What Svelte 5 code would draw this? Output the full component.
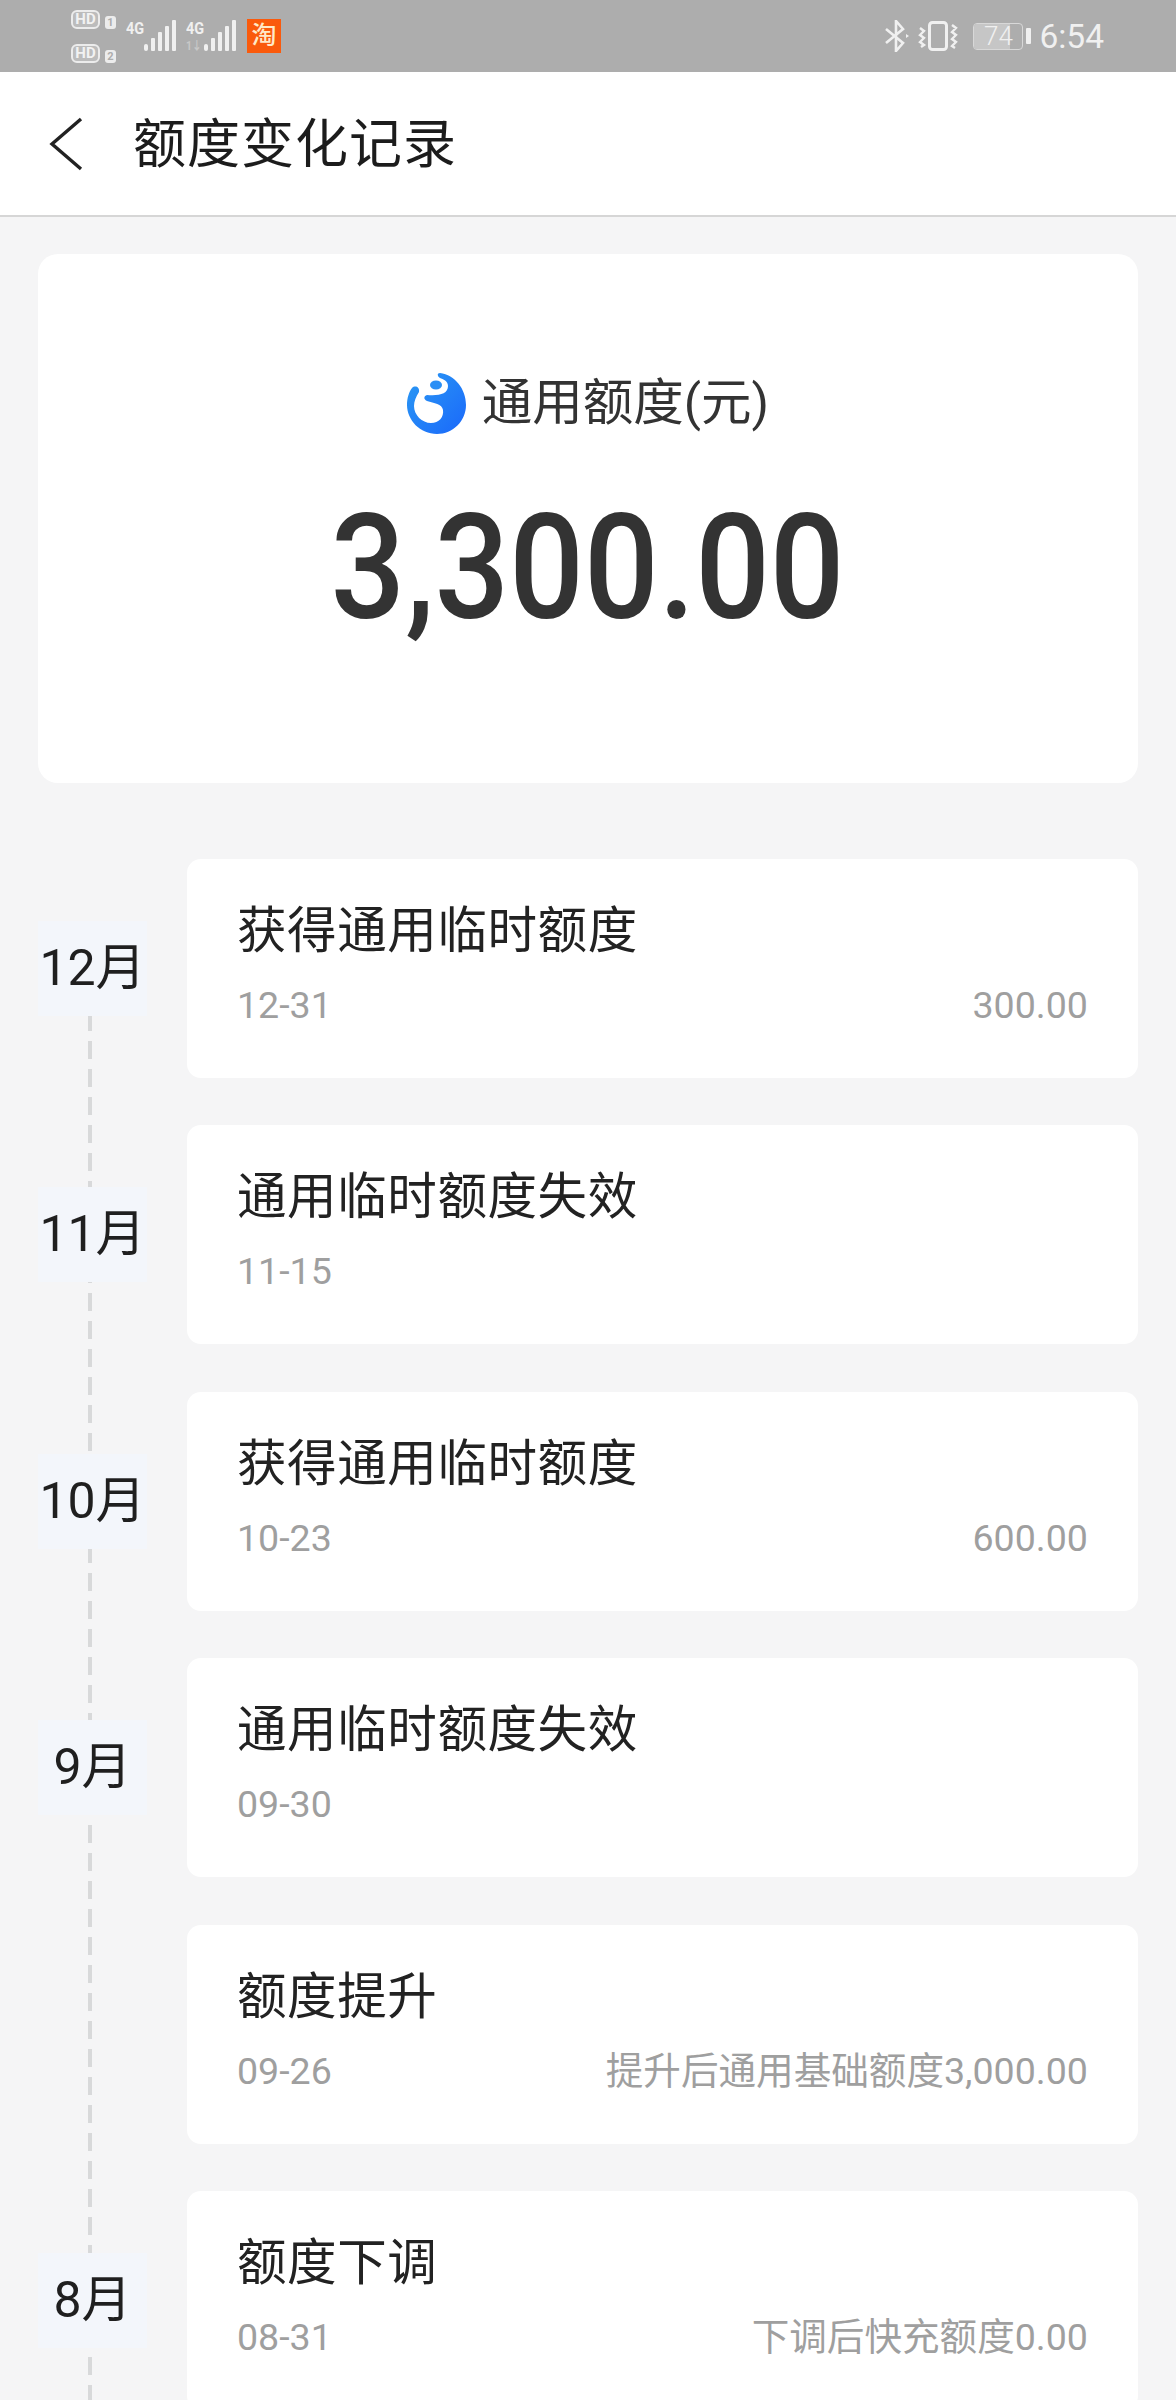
<script>
  const records = [
    { month: '12月', title: '获得通用临时额度', date: '12-31', note: '300.00' },
    { month: '11月', title: '通用临时额度失效', date: '11-15', note: '' },
    { month: '10月', title: '获得通用临时额度', date: '10-23', note: '600.00' },
    { month: '9月', title: '通用临时额度失效', date: '09-30', note: '' },
    { month: '', title: '额度提升', date: '09-26', note: '提升后通用基础额度3,000.00' },
    { month: '8月', title: '额度下调', date: '08-31', note: '下调后快充额度0.00' }
  ];
</script>

<div class="page">
  <div class="statusbar">
    <div class="status-left">
      <div class="hd">
        <div class="hd-row"><span class="hd-badge">HD</span><span class="sim">1</span></div>
        <div class="hd-row"><span class="hd-badge">HD</span><span class="sim">2</span></div>
      </div>
      {#each [0, 1] as n}
        <div class="signal">
          <div class="net">
            <span>4G</span>
            {#if n === 1}<span class="updown">1↓</span>{/if}
          </div>
          <svg width="32" height="32" viewBox="0 0 32 32" fill="#f0f0f0">
            <rect x="0" y="24" width="4" height="7" rx="2" />
            <rect x="7" y="18" width="4" height="13" rx="1" />
            <rect x="14" y="12" width="4" height="19" rx="1" />
            <rect x="21" y="6" width="4" height="25" rx="1" />
            <rect x="28" y="0" width="4" height="31" rx="1" />
          </svg>
        </div>
      {/each}
      <div class="taobao">淘</div>
    </div>
    <div class="status-right">
      <svg class="bt" width="25" height="32" viewBox="0 0 25 32" fill="none" stroke="#f0f0f0" stroke-width="2.6">
        <path d="M2 9l17 14-7 8V1l7 8L2 23" />
        <path d="M22 14l3 2-3 2z" fill="#f0f0f0" stroke="none" />
      </svg>
      <svg class="vibrate" width="40" height="32" viewBox="0 0 40 32" fill="none" stroke="#f0f0f0">
        <rect x="11.5" y="2.5" width="17" height="27" rx="3" stroke-width="3" />
        <path d="M2 8l4 3-4 4 4 3-4 4 4 3-3 2M34 5l4 3-4 4 4 3-4 4 4 3-4 4 3 2" stroke-width="2.4" />
      </svg>
      <div class="battery">
        <div class="battery-body"><div class="battery-fill" style="width: 74%"></div><span>74</span></div>
        <div class="battery-cap"></div>
      </div>
      <span class="clock">6:54</span>
    </div>
  </div>

  <header class="topbar">
    <svg class="back" width="34" height="54" viewBox="0 0 34 54" fill="none" stroke="#222" stroke-width="3.4">
      <path d="M32 2L3 27l29 25" />
    </svg>
    <h1>额度变化记录</h1>
  </header>

  <main class="content">
    <section class="summary">
      <div class="summary-label">
        <svg class="logo" width="60" height="62" viewBox="0 0 60 62">
          <defs>
            <linearGradient id="logo" x1="0" y1="0" x2="1" y2="1">
              <stop offset="0" stop-color="#2b9af3" />
              <stop offset="1" stop-color="#1a68fb" />
            </linearGradient>
          </defs>
          <path fill="url(#logo)" d="M33 1C48 3 59 17 59 33C59 49 46 62 30 62C13 62 0 48 0 33C0 26 2 20 5 16C8 13 13 15 12 20C9 25 7 29 7 34C7 43 15 51 24 51C32 51 37 45 36 38C35 32 27 31 20 29C16 27 17 24 20 23C32 24 41 22 41 14C41 9 36 7 33 6C30 4 30 1 33 1Z" />
          <ellipse cx="29" cy="13" rx="6" ry="4.5" fill="#2a8ff5" />
        </svg>
        <span>通用额度(元)</span>
      </div>
      <div class="amount">3,300.00</div>
    </section>

    <div class="timeline">
      {#each records as r}
        <div class="row">
          <div class="month-col">
            {#if r.month}<div class="month">{r.month}</div>{/if}
          </div>
          <div class="card">
            <div class="title">{r.title}</div>
            <div class="meta">
              <span>{r.date}</span>
              {#if r.note}<span>{r.note}</span>{/if}
            </div>
          </div>
        </div>
      {/each}
    </div>
  </main>
</div>

<style>
  :global(body) {
    margin: 0;
    background: #f5f5f6;
  }

  .page {
    height: 2400px;
    overflow: hidden;
    font-family: Roboto, "Noto Sans CJK SC", sans-serif;
    background: #f5f5f6;
  }

  .statusbar {
    height: 72px;
    background: #adadad;
    display: flex;
    align-items: center;
    justify-content: space-between;
    padding: 0 72px 0 71px;
    box-sizing: border-box;
    color: #f0f0f0;
  }

  .status-left,
  .status-right {
    display: flex;
    align-items: center;
  }

  .status-left { gap: 10px; }

  .vibrate { margin-left: 9px; }
  .battery { margin-left: 15px; }
  .clock { margin-left: 8px; }

  .hd {
    display: flex;
    flex-direction: column;
    gap: 15px;
  }

  .hd-row {
    display: flex;
    align-items: flex-end;
    gap: 5px;
  }

  .hd-badge {
    width: 29px;
    height: 19px;
    box-sizing: border-box;
    border: 2.5px solid #ececec;
    border-radius: 6px;
    background: #bcbcbc;
    color: #f2f2f2;
    font-size: 15px;
    font-weight: 700;
    line-height: 14px;
    text-align: center;
  }

  .sim {
    width: 11px;
    height: 13px;
    border-radius: 3px;
    background: #ececec;
    color: #adadad;
    font-size: 11px;
    font-weight: 700;
    line-height: 13px;
    text-align: center;
  }

  .signal {
    display: flex;
    align-items: flex-start;
    height: 32px;
  }

  .net {
    width: 18px;
    font-size: 17px;
    font-weight: 700;
    line-height: 16px;
    transform: scaleX(0.85);
    transform-origin: left top;
  }

  .updown {
    display: block;
    font-size: 12px;
    line-height: 12px;
    color: #c8c8c8;
    margin-top: 4px;
  }

  .taobao {
    width: 34px;
    height: 34px;
    margin-left: 1px;
    background: #fa5a0c;
    color: #ffe9c8;
    font-size: 25px;
    font-weight: 500;
    line-height: 34px;
    text-align: center;
  }

  .battery {
    display: flex;
    align-items: center;
    gap: 3px;
  }

  .battery-body {
    position: relative;
    width: 50px;
    height: 27px;
    border: 1.5px solid #d8d8d8;
    border-radius: 4px;
    box-sizing: border-box;
  }

  .battery-fill {
    height: 100%;
    border-radius: 2.5px 0 0 2.5px;
    background: #c6c6c6;
  }

  .battery-body span {
    position: absolute;
    inset: 0;
    font-size: 26px;
    line-height: 24px;
    text-align: center;
    font-weight: 300;
    color: #f0f0f0;
  }

  .battery-cap {
    width: 5px;
    height: 16px;
    border-radius: 1px;
    background: #f0f0f0;
  }

  .clock {
    font-size: 33.5px;
    color: #f0f0f0;
  }

  .topbar {
    height: 145px;
    background: #fff;
    border-bottom: 2px solid #d6d6d6;
    box-sizing: border-box;
    display: flex;
    align-items: center;
    padding-left: 49px;
  }

  .back { margin-right: 50px; }

  .topbar h1 {
    margin: -8px 0 0;
    font-size: 53px;
    font-weight: 400;
    color: #1c1c1c;
    letter-spacing: 1px;
  }

  .content {
    padding: 37px 38px 0;
  }

  .summary {
    height: 529px;
    background: #fff;
    border-radius: 20px;
    padding-top: 114px;
    box-sizing: border-box;
    display: flex;
    flex-direction: column;
    align-items: center;
  }

  .summary-label {
    display: flex;
    align-items: center;
    gap: 15px;
    height: 62px;
    font-size: 50.5px;
    color: #333;
  }

  .summary-label span { margin-top: -3px; }

  .logo { margin-top: 8px; }

  .amount {
    margin-top: 59px;
    font-size: 146px;
    line-height: 160px;
    font-weight: 500;
    color: #333;
    transform: scaleX(0.9);
  }

  .timeline {
    position: relative;
    margin-top: 76px;
    display: flex;
    flex-direction: column;
    gap: 47.4px;
  }

  .timeline::before {
    content: "";
    position: absolute;
    left: 50px;
    top: 70px;
    bottom: 0;
    width: 4px;
    background: repeating-linear-gradient(to bottom, #d8d9da 0 18px, transparent 18px 28px);
  }

  .row {
    display: flex;
    align-items: center;
    position: relative;
  }

  .month-col {
    width: 149px;
    flex: none;
  }

  .month {
    width: 109px;
    height: 95px;
    background: #f3f6fb;
    color: #1f1f1f;
    font-size: 50px;
    line-height: 94px;
    text-align: center;
    position: relative;
  }

  .card {
    flex: 1;
    height: 219px;
    box-sizing: border-box;
    background: #fff;
    border-radius: 14px;
    padding: 40px 50px 0;
  }

  .title {
    font-size: 49.5px;
    line-height: 64px;
    color: #222;
    letter-spacing: 0.6px;
  }

  .meta {
    margin-top: 17px;
    display: flex;
    justify-content: space-between;
    font-size: 37.6px;
    line-height: 50px;
    color: #9f9f9f;
  }
</style>
